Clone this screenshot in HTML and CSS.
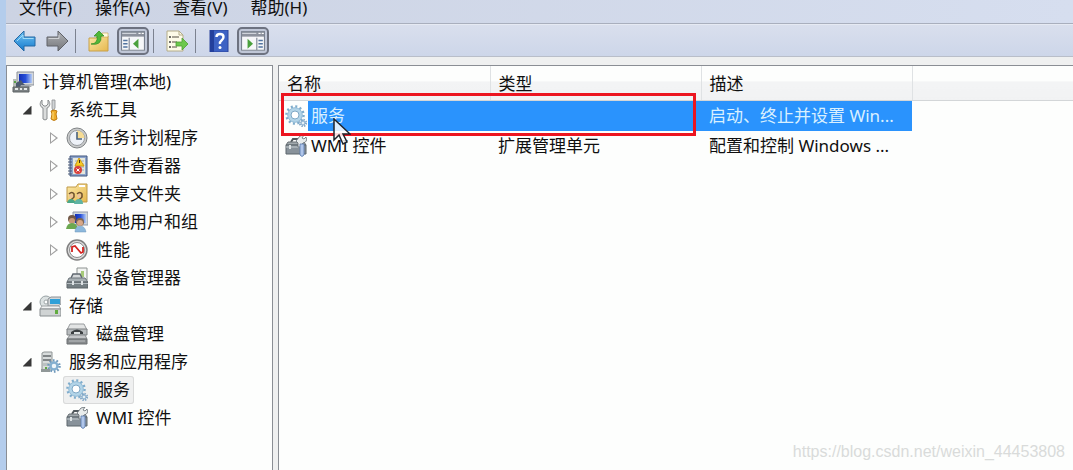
FILE: index.html
```html
<!DOCTYPE html>
<html lang="zh-CN">
<head>
  <meta charset="UTF-8">
  <meta name="viewport" content="width=device-width, initial-scale=1.0">
  <title>计算机管理</title>
  <link rel="stylesheet" href="styles.css">
</head>
<body>
  <!-- 图标定义 -->
  <svg class="icon-defs" aria-hidden="true">
    <defs>
      <linearGradient id="metal" x1="0" y1="0" x2="0" y2="1">
        <stop offset="0" stop-color="#eef0f0"/><stop offset="1" stop-color="#8c9296"/>
      </linearGradient>
      <linearGradient id="screen" x1="0" y1="0" x2="1" y2="0">
        <stop offset="0" stop-color="#1430b8"/><stop offset="0.5" stop-color="#2850d8"/><stop offset="1" stop-color="#b4ccf4"/>
      </linearGradient>
      <linearGradient id="folder" x1="0" y1="0" x2="1" y2="1">
        <stop offset="0" stop-color="#fbe9a8"/><stop offset="1" stop-color="#e6b84e"/>
      </linearGradient>
      <linearGradient id="blue" x1="0" y1="0" x2="0" y2="1">
        <stop offset="0" stop-color="#74c6f4"/><stop offset="1" stop-color="#1478cc"/>
      </linearGradient>
      <linearGradient id="gray" x1="0" y1="0" x2="0" y2="1">
        <stop offset="0" stop-color="#b0b2b6"/><stop offset="1" stop-color="#74767a"/>
      </linearGradient>
      <symbol id="i-computer" viewBox="0 0 22 22">
        <path d="M5 1h17v13H5z" fill="#d4d8dc" stroke="#8a9098"/>
        <path d="M7 3h13v9H7z" fill="url(#screen)"/>
        <path d="M1 8h4v9H1z" fill="#b8beb8"/>
        <path d="M2 10h2v2H2z" fill="#58a048"/>
        <path d="M4 12l5-3 2 3 4 4H4z" fill="#4c5a70"/>
        <path d="M9 14h8l3 2H8z" fill="#a0a6ac"/>
        <path d="M1 16h16v5H1z" fill="#7c8284" stroke="#5c6264"/>
        <path d="M3 18h3M8 18h2M12 18h3" stroke="#e4e8e8" stroke-width="2"/>
      </symbol>
      <symbol id="i-tools" viewBox="0 0 22 22">
        <path d="M3 1C0 4 1 8 4 9v11q2 2 4 0V9c3-1 4-5 1-8v4L7 7H5L3 5z" fill="#dadcdc" stroke="#8a8e90"/>
        <path d="M13 1h3v8l-2 3-1-3z" fill="#d0d4d6" stroke="#8a8e90" stroke-width=".8"/>
        <path d="M12 12q3-2 6 0l-1 3 1 5q-3 3-6 0l1-5z" fill="#efad2a" stroke="#c07c14"/>
        <path d="M14 13v7" stroke="#fbdc80"/>
      </symbol>
      <symbol id="i-clock" viewBox="0 0 22 22">
        <circle cx="11" cy="11" r="10" fill="#c8caca" stroke="#808486"/>
        <circle cx="11" cy="11" r="7.5" fill="#eef2f8" stroke="#989ca0"/>
        <path d="M11 11V3.500a7.500 7.500 0 0 1 7.500 7.500z" fill="#f6dc94"/>
        <path d="M11 5v7h5" fill="none" stroke="#4a627c" stroke-width="1.600"/>
      </symbol>
      <symbol id="i-event" viewBox="0 0 22 22">
        <path d="M4 1h17v20H4z" fill="#8ca4cc" stroke="#40567e"/>
        <path d="M7 3h12v16H7z" fill="#e6e8dc"/>
        <path d="M9 6h9M9 9h9M9 12h9M9 15h9" stroke="#98a8ba"/>
        <path d="M2 4h4M2 7h4M2 10h4M2 13h4M2 16h4M2 19h4" stroke="#4c5c78"/>
        <path d="M13 3l5 8H9z" fill="#f6ca28" stroke="#d09c10"/>
        <path d="M13.500 5v3" stroke="#403010"/>
        <circle cx="12" cy="15" r="4" fill="#d8403c"/>
        <path d="M10.500 13.500l3 3m0-3l-3 3" stroke="#fff"/>
      </symbol>
      <symbol id="i-share" viewBox="0 0 22 22">
        <path d="M1 4h9l2-3h9v18H1z" fill="url(#folder)" stroke="#c09a48"/>
        <path d="M13 2h6v2h-6z" fill="#fff"/>
        <path d="M3 11q3-3 5 0v3l-4 4M11 11q3-3 5 0v3l-4 4" fill="none" stroke="#6c5030" stroke-width="1.500"/>
        <circle cx="5" cy="13" r="2" fill="#ecc49c"/>
        <path d="M1 20q1-4 4-4t5 4z" fill="#4aa888"/>
        <circle cx="13" cy="13" r="2" fill="#ecc49c"/>
        <path d="M8 21q1-5 5-5t4 5z" fill="#60b4a4"/>
      </symbol>
      <symbol id="i-users" viewBox="0 0 22 22">
        <path d="M7 1h15v13H7z" fill="#ced6de" stroke="#9098a8"/>
        <path d="M9 3h11v9H9z" fill="url(#screen)"/>
        <circle cx="6" cy="8" r="4" fill="#705848"/><circle cx="6" cy="10" r="3" fill="#c89878"/>
        <path d="M0 18q1-6 6-6t6 6z" fill="#6ca850"/>
        <circle cx="14" cy="11" r="4" fill="#806850"/><circle cx="14" cy="12" r="3" fill="#d8a888"/>
        <path d="M9 21q0-6 5-6t6 6z" fill="#8cb8dc" stroke="#6c94b8" stroke-width=".5"/>
      </symbol>
      <symbol id="i-perf" viewBox="0 0 22 22">
        <circle cx="11" cy="11" r="10" fill="#dcdcdc" stroke="#808080" stroke-width="1.500"/>
        <circle cx="11" cy="11" r="7.500" fill="#fff" stroke="#8c8c8c"/>
        <path d="M6 13V8l3-1 6 7 2-1V8" fill="none" stroke="#d42420" stroke-width="1.800"/>
      </symbol>
      <symbol id="i-device" viewBox="0 0 22 22">
        <path d="M11 1h10v12H11z" fill="#f2f4f2" stroke="#8c9290"/>
        <path d="M15 4h3v6h-3z" fill="#a6ca78"/>
        <path d="M5 11l2-4h7l2 4" fill="#d4d8da" stroke="#606870" stroke-width="1.500"/>
        <path d="M3 11h16l3 4H1z" fill="#a8b0b4" stroke="#6c747a"/>
        <path d="M1 15h21v6H1z" fill="#747e82" stroke="#5c6468"/>
        <path d="M1 16.500h21" stroke="#b4bcc0"/><path d="M6 14h2v4H6zM15 14h2v4h-2z" fill="#dde2e4"/>
      </symbol>
      <symbol id="i-storage" viewBox="0 0 22 22">
        <circle cx="7" cy="7" r="6" fill="#dce2e2" stroke="#98a2a4"/>
        <circle cx="7" cy="7" r="2" fill="#fff" stroke="#a0a8aa"/>
        <path d="M9 4l3-2h10v7l-3 2H9z" fill="#d2d6d8" stroke="#8c9296"/>
        <path d="M11 4h10v5H11z" fill="#30a0d8"/>
        <path d="M3 11h17l2 3H1z" fill="#f2f4f4" stroke="#a0a4a6"/>
        <path d="M1 14h21v7H1z" fill="#d0d4d4" stroke="#888e90"/>
        <path d="M16 15h3v4h-3z" fill="#62ac40"/>
      </symbol>
      <symbol id="i-disk" viewBox="0 0 22 22">
        <path d="M4 1h14l3 6H1z" fill="#e2e4e4" stroke="#989c9e"/>
        <path d="M1 6h20v6H1z" fill="#b8bcbe" stroke="#7c8082"/>
        <path d="M5 9q6-5 12 0v2H5z" fill="#3c4042"/>
        <path d="M8 9h6v2H8z" fill="#dce0e0"/>
        <path d="M4 12h15l2 4H1z" fill="#c4c6c8" stroke="#888c8e"/>
        <path d="M1 16h20v5H1z" fill="#868a8c" stroke="#6c7072"/>
        <path d="M3 18h16" stroke="#bcc0c2"/>
      </symbol>
      <symbol id="i-gears" viewBox="0 0 22 22">
        <circle cx="10" cy="10" r="8.500" fill="none" stroke="#7eaccc" stroke-width="2.500" stroke-dasharray="2 2.450"/>
        <circle cx="10" cy="10" r="5.500" fill="none" stroke="#b2d4e8" stroke-width="4"/>
        <circle cx="10" cy="10" r="7.300" fill="none" stroke="#8ab4d0" stroke-width=".8"/>
        <circle cx="10" cy="10" r="4" fill="#fff" stroke="#7ea8c6"/>
        <circle cx="18" cy="18" r="3" fill="none" stroke="#86aac8" stroke-width="2.500" stroke-dasharray="1.300 1.056"/>
        <circle cx="18" cy="18" r="2" fill="#e4f0f6" stroke="#80a8ca"/>
      </symbol>
      <symbol id="i-server" viewBox="0 0 22 22">
        <path d="M3 2l2-1h8v18H3z" fill="#d8dcdc" stroke="#8e9494"/>
        <path d="M4 5h8M4 9h8" stroke="#646a6c" stroke-width="1.500"/>
        <path d="M4 12h7v3H4z" fill="#bcc2c2"/><path d="M2 18h9v3H2z" fill="#909898"/>
        <path d="M6 16h2v2H6z" fill="#60a844"/>
        <circle cx="15" cy="15" r="5.500" fill="none" stroke="#6e98ba" stroke-width="2.500" stroke-dasharray="1.600 1.856"/>
        <circle cx="15" cy="15" r="3.500" fill="#eef6fa" stroke="#84b0d0" stroke-width="2.500"/>
      </symbol>
      <symbol id="i-wmi" viewBox="0 0 22 22">
        <path d="M6 7l2-3h6l2 3" fill="none" stroke="#50585c" stroke-width="2"/>
        <path d="M3 7h16l2 3H1z" fill="#a2aaae" stroke="#687074"/>
        <path d="M1 10h20v9H1z" fill="#88929a" stroke="#5c666c"/>
        <path d="M1 12h16" stroke="#c4cccf"/><path d="M4 10h2v4H4z" fill="#dce2e4"/>
        <path d="M11 6l4-5 4-1-2 3 2 1 2-2q2 5-3 6l-3 4h-2V8z" fill="#e8ecec" stroke="#626a70" stroke-width=".8"/>
        <path d="M15 9h4v11q-2 3-4 0z" fill="#b0c6ea" stroke="#5878ac" stroke-width=".8"/>
      </symbol>
      <symbol id="i-back" viewBox="0 0 24 22">
        <path d="M1 11L11 1v6h11v9H11v5z" fill="url(#blue)" stroke="#2468a4" stroke-linejoin="round"/>
        <path d="M4 11l6-6v3.500h10.500" fill="none" stroke="#a0dcf8"/>
      </symbol>
      <symbol id="i-forward" viewBox="0 0 24 22">
        <path d="M23 11L13 1v6H2v9h11v5z" fill="url(#gray)" stroke="#606268" stroke-linejoin="round"/>
        <path d="M3.500 8.500H14V5" fill="none" stroke="#d0d2d6"/>
      </symbol>
      <symbol id="i-up" viewBox="0 0 22 22">
        <path d="M1 8h7l2-2h10v15H1z" fill="url(#folder)" stroke="#c8a048"/>
        <path d="M14 3h6v4h-6z" fill="#fffbe0" stroke="#c8a048" stroke-width=".6"/>
        <path d="M3 14q7 0 6-8H6l5-5 5 5h-3q1 10-10 8z" fill="#50b838" stroke="#3a9228" stroke-width=".8"/>
      </symbol>
      <symbol id="i-pane-left" viewBox="0 0 22 18">
        <path d="M0 0h22v18H0z" fill="#f6f7f9"/>
        <path d="M0 0h22v5H0z" fill="#8d929d"/><path d="M1 2h13" stroke="#d8dbe2"/><path d="M16 2h2M19 2h2" stroke="#fff"/>
        <path d="M.5.5h21v17H.5zM7.500 6v12" fill="none" stroke="#7a8290"/>
        <path d="M2 8.500h4M2 11.500h4M2 14.500h4" stroke="#5274a0" stroke-width="1.500"/>
        <path d="M16 7v9l-5-4.500z" fill="#4aa03c"/>
      </symbol>
      <symbol id="i-pane-right" viewBox="0 0 22 18">
        <path d="M0 0h22v18H0z" fill="#f6f7f9"/>
        <path d="M0 0h22v5H0z" fill="#8d929d"/><path d="M1 2h13" stroke="#d8dbe2"/><path d="M16 2h2M19 2h2" stroke="#fff"/>
        <path d="M.5.5h21v17H.5zM14.500 6v12" fill="none" stroke="#7a8290"/>
        <path d="M16 8.500h4M16 11.500h4M16 14.500h4" stroke="#5274a0" stroke-width="1.500"/>
        <path d="M6 7v9l5-4.500z" fill="#4aa03c"/>
      </symbol>
      <symbol id="i-export" viewBox="0 0 24 22">
        <path d="M2 1h12l4 4v16H2z" fill="#fdfbe8" stroke="#b4ac88"/>
        <path d="M14 1v4h4" fill="none" stroke="#b4ac88"/>
        <path d="M4 7h2M4 12h2M4 17h2" stroke="#444" stroke-width="1.500"/>
        <path d="M7 7h7M7 12h5M7 17h5" stroke="#8c8878" stroke-width="1.500"/>
        <path d="M11 12h6V8l6 6-6 6v-4h-6z" fill="#6cc84c" stroke="#4ca034" stroke-width=".8"/>
      </symbol>
      <symbol id="i-help" viewBox="0 0 20 22">
        <path d="M1 0h18v22H1z" fill="#3d62c4" stroke="#2c459c"/>
        <path d="M1 0h4v22H1z" fill="#233f9c"/>
        <path d="M7.500 7q0-3 3.500-3t3.500 3q0 2-2 3.500T11 14" fill="none" stroke="#fff" stroke-width="2.400"/>
        <circle cx="11" cy="17.500" r="1.500" fill="#fff"/>
      </symbol>
    </defs>
  </svg>

  <div class="window">
    <nav class="menu-bar">
      <button type="button">文件(F)</button>
      <button type="button">操作(A)</button>
      <button type="button">查看(V)</button>
      <button type="button">帮助(H)</button>
    </nav>

    <div class="toolbar">
      <button type="button" aria-label="后退"><svg class="tool-icon"><use href="#i-back"/></svg></button>
      <button type="button" aria-label="前进"><svg class="tool-icon"><use href="#i-forward"/></svg></button>
      <span class="separator"></span>
      <button type="button" aria-label="向上"><svg class="tool-icon"><use href="#i-up"/></svg></button>
      <button type="button" class="pressed" aria-label="显示/隐藏控制台树"><svg class="tool-icon"><use href="#i-pane-left"/></svg></button>
      <span class="separator"></span>
      <button type="button" aria-label="导出列表"><svg class="tool-icon"><use href="#i-export"/></svg></button>
      <span class="separator"></span>
      <button type="button" aria-label="帮助"><svg class="tool-icon"><use href="#i-help"/></svg></button>
      <button type="button" class="pressed" aria-label="显示/隐藏操作窗格"><svg class="tool-icon"><use href="#i-pane-right"/></svg></button>
    </div>

    <div class="panes">
      <!-- 控制台树 -->
      <div class="tree">
        <a class="node root" href="#"><svg class="icon"><use href="#i-computer"/></svg><span>计算机管理(本地)</span></a>
        <ul>
          <li>
            <div class="row"><button type="button" class="twisty open" aria-label="折叠"></button><a class="node" href="#"><svg class="icon"><use href="#i-tools"/></svg><span>系统工具</span></a></div>
            <ul>
              <li class="row"><button type="button" class="twisty" aria-label="展开"></button><a class="node" href="#"><svg class="icon"><use href="#i-clock"/></svg><span>任务计划程序</span></a></li>
              <li class="row"><button type="button" class="twisty" aria-label="展开"></button><a class="node" href="#"><svg class="icon"><use href="#i-event"/></svg><span>事件查看器</span></a></li>
              <li class="row"><button type="button" class="twisty" aria-label="展开"></button><a class="node" href="#"><svg class="icon"><use href="#i-share"/></svg><span>共享文件夹</span></a></li>
              <li class="row"><button type="button" class="twisty" aria-label="展开"></button><a class="node" href="#"><svg class="icon"><use href="#i-users"/></svg><span>本地用户和组</span></a></li>
              <li class="row"><button type="button" class="twisty" aria-label="展开"></button><a class="node" href="#"><svg class="icon"><use href="#i-perf"/></svg><span>性能</span></a></li>
              <li class="row leaf"><a class="node" href="#"><svg class="icon"><use href="#i-device"/></svg><span>设备管理器</span></a></li>
            </ul>
          </li>
          <li>
            <div class="row"><button type="button" class="twisty open" aria-label="折叠"></button><a class="node" href="#"><svg class="icon"><use href="#i-storage"/></svg><span>存储</span></a></div>
            <ul>
              <li class="row leaf"><a class="node" href="#"><svg class="icon"><use href="#i-disk"/></svg><span>磁盘管理</span></a></li>
            </ul>
          </li>
          <li>
            <div class="row"><button type="button" class="twisty open" aria-label="折叠"></button><a class="node" href="#"><svg class="icon"><use href="#i-server"/></svg><span>服务和应用程序</span></a></div>
            <ul>
              <li class="row leaf"><a class="node selected" href="#"><svg class="icon"><use href="#i-gears"/></svg><span>服务</span></a></li>
              <li class="row leaf"><a class="node" href="#"><svg class="icon"><use href="#i-wmi"/></svg><span>WMI 控件</span></a></li>
            </ul>
          </li>
        </ul>
      </div>

      <!-- 结果列表 -->
      <div class="list">
        <table>
          <colgroup><col class="col-data"><col class="col-data"><col class="col-data"><col></colgroup>
          <thead>
            <tr><th>名称</th><th>类型</th><th>描述</th><th></th></tr>
          </thead>
          <tbody>
            <tr class="selected">
              <td class="name"><div class="name-cell"><svg class="icon"><use href="#i-gears"/></svg><span>服务</span></div></td>
              <td></td>
              <td>启动、终止并设置 Win...</td>
              <td></td>
            </tr>
            <tr>
              <td class="name"><div class="name-cell"><svg class="icon"><use href="#i-wmi"/></svg><span>WMI 控件</span></div></td>
              <td>扩展管理单元</td>
              <td>配置和控制 Windows ...</td>
              <td></td>
            </tr>
          </tbody>
        </table>
        <div class="highlight"></div>
        <svg class="cursor" viewBox="0 0 18 28">
          <path d="M1 1v21l5-5 4 9 4-2-4-8h7z" fill="#fff" fill-opacity=".85" stroke="#20242c" stroke-width="1.500"/>
        </svg>
        <div class="watermark">https://blog.csdn.net/weixin_44453808</div>
      </div>
    </div>
  </div>
</body>
</html>
```
FILE: styles.css
```css
* {
  box-sizing: border-box;
}

body {
  margin: 0;
  background-color: #b4cdec;
  color: #101010;
  font-family: "Noto Sans", "Noto Sans CJK SC", sans-serif;
  font-size: 17px;
  line-height: 28px;
}

button {
  border: 0;
  padding: 0;
  background: none;
  color: inherit;
  font: inherit;
}

.icon-defs {
  position: absolute;
  width: 0;
  height: 0;
}

.window {
  display: flex;
  flex-direction: column;
  min-height: 100vh;
  margin-left: 6px;
  background-color: #eff0f0;
}

/* 菜单栏 */
.menu-bar {
  display: flex;
  align-items: flex-start;
  gap: 23px;
  height: 24px;
  padding-left: 13px;
  border-bottom: 1px solid #a9afbd;
  background: linear-gradient(to right, #ccd3e3, #d6deef);
}

.menu-bar button {
  height: 16px;
  line-height: 16px;
}

.toolbar {
  display: flex;
  align-items: center;
  gap: 4px;
  height: 33px;
  padding-left: 5px;
  border-top: 1px solid #e6eaf3;
  border-bottom: 1px solid #b9bec9;
  background: linear-gradient(#d9dfed, #cdd6e9);
}

.toolbar button {
  display: flex;
  align-items: center;
  justify-content: center;
  width: 28px;
  height: 28px;
}

.toolbar .pressed {
  width: 32px;
  border: 2px solid #6d7280;
  border-radius: 5px;
  background-color: #c0c7d7;
}

.tool-icon {
  width: 24px;
  height: 22px;
}

.separator {
  width: 1px;
  height: 24px;
  margin-right: 5px;
  background-color: #7c8290;
}

.panes {
  display: flex;
  flex: 1;
  gap: 5px;
  padding-top: 8px;
}

.tree {
  flex: none;
  width: 267px;
  padding: 2px 0 0 5px;
  border: 1px solid #8a8e94;
  border-width: 1px 1px 0;
  background-color: #fdfefd;
}

.tree ul {
  margin: 0;
  padding: 0;
  list-style: none;
}

.tree ul ul {
  padding-left: 27px;
}

.row {
  display: flex;
  align-items: center;
  height: 28px;
  padding-left: 6px;
}

.leaf {
  padding-left: 24px;
}

.twisty {
  width: 18px;
  height: 18px;
  display: flex;
  align-items: center;
  justify-content: center;
}

.twisty::before {
  content: '';
  width: 8px;
  height: 12px;
  background-color: #a0a0a0;
  clip-path: polygon(0 0, 100% 50%, 0 100%, 0 0, 1px 2px, 1px 10px, 6px 50%, 1px 2px);
}

.twisty.open::before {
  width: 9px;
  height: 9px;
  background-color: #383838;
  clip-path: polygon(100% 0, 100% 100%, 0 100%);
}

.node {
  display: flex;
  align-items: center;
  gap: 8px;
  height: 28px;
  padding: 0 4px 0 3px;
  color: inherit;
  text-decoration: none;
}

.node.root {
  padding-left: 0;
}

.node.selected {
  border-radius: 3px;
  background-color: #eff0f0;
  box-shadow: inset 0 0 0 1px #d9dada;
}

.icon {
  flex: none;
  width: 22px;
  height: 22px;
}

.list {
  position: relative;
  flex: 1;
  min-width: 0;
  border: 1px solid #8a8e94;
  border-width: 1px 0 0 1px;
  background-color: #fdfefd;
}

table {
  width: 100%;
  border-collapse: collapse;
  table-layout: fixed;
}

.col-data {
  width: 211px;
}

th {
  height: 34px;
  padding: 2px 8px 0;
  border-right: 1px solid #dfe2e4;
  border-bottom: 1px solid #d3d6d8;
  background: linear-gradient(#fdfefd 45%, #f3f4f5 46%, #f1f2f3);
  font-weight: normal;
  text-align: left;
}

th:last-child {
  border-right: 0;
}

td {
  height: 30px;
  padding: 0 8px;
  white-space: nowrap;
}

.name {
  padding: 0 0 0 6px;
}

.name-cell {
  display: flex;
  align-items: center;
  gap: 1px;
}

.name-cell span {
  flex: 1;
  padding-left: 3px;
  line-height: 30px;
}

.selected td:not(:last-child):not(.name),
.selected .name-cell span {
  background-color: #2a93fd;
  color: #d9f0ff;
}

/* 红色标注框 */
.highlight {
  position: absolute;
  top: 27px;
  left: 2px;
  width: 415px;
  height: 43px;
  border: 3px solid #ec1520;
}

.cursor {
  position: absolute;
  top: 52px;
  left: 54px;
  width: 18px;
  height: 28px;
}

.watermark {
  position: absolute;
  right: 8px;
  bottom: 8px;
  color: #d9dbda;
  font-family: "Liberation Sans", sans-serif;
  font-size: 16px;
  line-height: 20px;
}
```
